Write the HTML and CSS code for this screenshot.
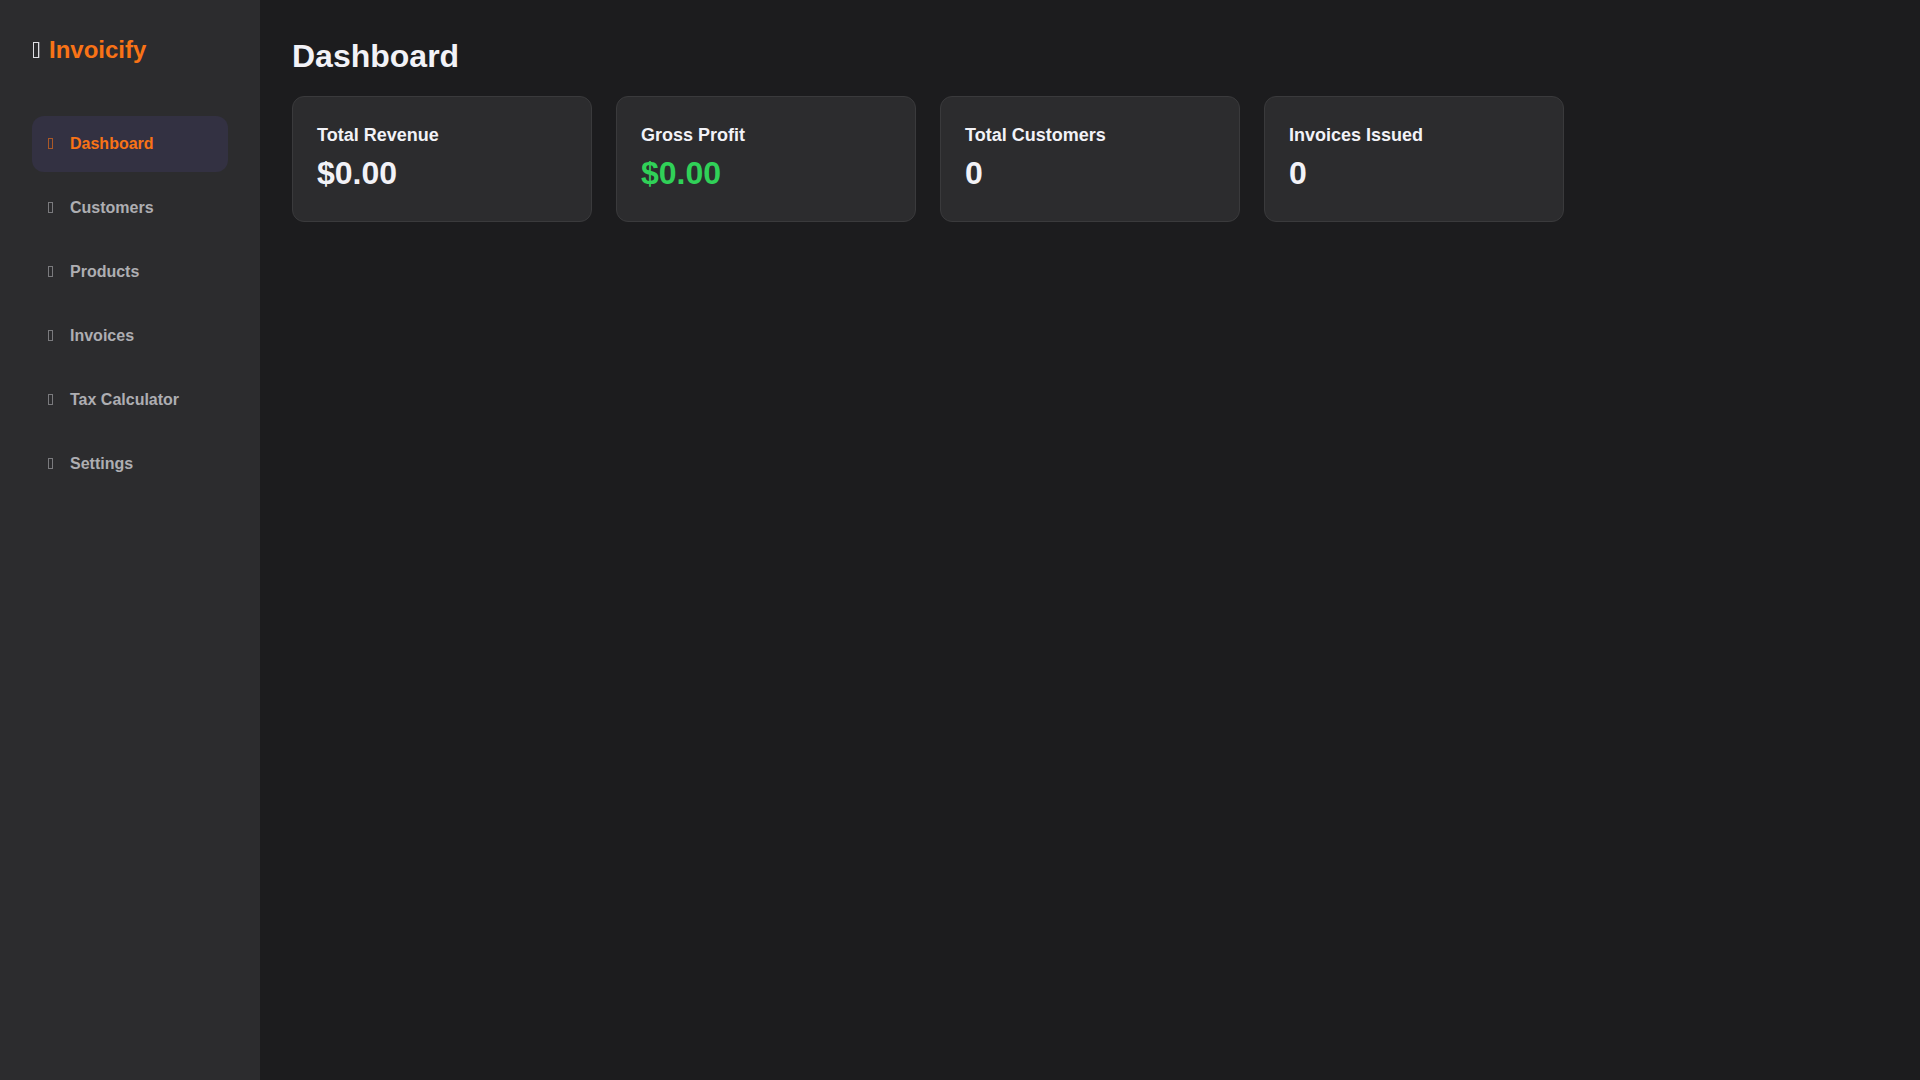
FILE: index.html
```html
<!DOCTYPE html>
<html lang="en">
<head>
  <meta charset="UTF-8" />
  <meta name="viewport" content="width=device-width, initial-scale=1.0" />
  <title>Invoicify</title>
  <link rel="stylesheet" href="styles.css">
</head>
<body>
  <div class="app">
    <aside class="sidebar">
      <div class="logo">
        <svg class="logo-icon" viewBox="0 0 9 18" aria-hidden="true"><rect x="1.5" y="1.5" width="5" height="15"/><path d="M7.5 1v16"/></svg>
        <span>Invoicify</span>
      </div>

      <nav class="nav">
        <a href="#dashboard" class="nav-link active">
          <svg class="nav-icon" viewBox="0 0 6 12" aria-hidden="true"><rect x="0.5" y="0.5" width="4" height="10"/></svg>
          Dashboard
        </a>
        <a href="#customers" class="nav-link">
          <svg class="nav-icon" viewBox="0 0 6 12" aria-hidden="true"><rect x="0.5" y="0.5" width="4" height="10"/></svg>
          Customers
        </a>
        <a href="#products" class="nav-link">
          <svg class="nav-icon" viewBox="0 0 6 12" aria-hidden="true"><rect x="0.5" y="0.5" width="4" height="10"/></svg>
          Products
        </a>
        <a href="#invoices" class="nav-link">
          <svg class="nav-icon" viewBox="0 0 6 12" aria-hidden="true"><rect x="0.5" y="0.5" width="4" height="10"/></svg>
          Invoices
        </a>
        <a href="#tax" class="nav-link">
          <svg class="nav-icon" viewBox="0 0 6 12" aria-hidden="true"><rect x="0.5" y="0.5" width="4" height="10"/></svg>
          Tax Calculator
        </a>
        <a href="#settings" class="nav-link">
          <svg class="nav-icon" viewBox="0 0 6 12" aria-hidden="true"><rect x="0.5" y="0.5" width="4" height="10"/></svg>
          Settings
        </a>
      </nav>
    </aside>

    <main class="content">
      <h1>Dashboard</h1>
      <div class="cards">
        <div class="card">
          <h3>Total Revenue</h3>
          <p class="value">$0.00</p>
        </div>
        <div class="card">
          <h3>Gross Profit</h3>
          <p class="value profit">$0.00</p>
        </div>
        <div class="card">
          <h3>Total Customers</h3>
          <p class="value">0</p>
        </div>
        <div class="card">
          <h3>Invoices Issued</h3>
          <p class="value">0</p>
        </div>
      </div>
    </main>
  </div>
</body>
</html>
```
FILE: styles.css
```css
:root {
  --bg: #1c1c1e;
  --surface: #2c2c2e;
  --border: #3a3a3c;
  --text: #f2f2f7;
  --muted: #aeaeb2;
  --accent: #f97316;
  --success: #30d158;
}
* {
  box-sizing: border-box;
  margin: 0;
  padding: 0;
}
body {
  font-family: "Liberation Sans", Arial, sans-serif;
  font-size: 16px;
  line-height: 24px;
  background: var(--bg);
  color: var(--text);
}
.app {
  display: flex;
  min-height: 100vh;
}

/* Sidebar */
.sidebar {
  width: 260px;
  flex-shrink: 0;
  padding: 32px;
  background: var(--surface);
}
.logo {
  display: flex;
  align-items: center;
  gap: 8px;
  margin-bottom: 48px;
  font-size: 24px;
  font-weight: bold;
  line-height: 36px;
  color: var(--accent);
}
.logo-icon {
  width: 9px;
  height: 18px;
  fill: none;
  stroke: var(--text);
  opacity: 0.9;
}
.logo-icon path {
  opacity: 0.3;
}
.nav {
  display: flex;
  flex-direction: column;
  gap: 8px;
}
.nav-link {
  display: flex;
  align-items: center;
  gap: 16px;
  padding: 16px;
  border-radius: 12px;
  font-weight: bold;
  color: var(--muted);
  text-decoration: none;
}
.nav-link.active {
  background: #333142;
  color: var(--accent);
}
.nav-icon {
  width: 6px;
  height: 12px;
  fill: none;
  stroke: currentColor;
  opacity: 0.6;
}

/* Main area */
.content {
  flex: 1;
  padding: 32px;
}
h1 {
  margin-bottom: 16px;
  font-size: 32px;
  line-height: 48px;
}
.cards {
  display: grid;
  grid-template-columns: repeat(auto-fill, minmax(280px, 1fr));
  gap: 24px;
}
.card {
  padding: 24px;
  background: var(--surface);
  border: 1px solid var(--border);
  border-radius: 12px;
}
.card h3 {
  font-size: 18px;
  line-height: 28px;
}
.value {
  font-size: 32px;
  font-weight: bold;
  line-height: 48px;
}
.value.profit {
  color: var(--success);
}
```
